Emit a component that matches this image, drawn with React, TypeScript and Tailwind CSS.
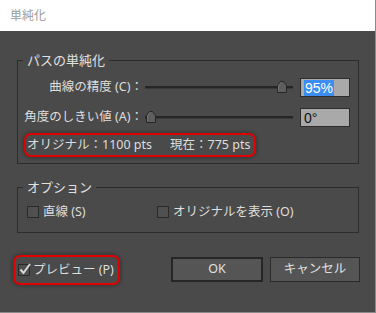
import React from "react";

const FONT = '"Noto Sans", "Noto Sans CJK JP", sans-serif';

function Thumb() {
  return (
    <svg width="10" height="12" viewBox="0 0 10 12" className="block">
      <path d="M0.5 11.5 V4.5 L3.5 0.5 H6.5 L9.5 4.5 V11.5 Z" fill="#5e5e5e" stroke="#262626" strokeWidth="1" />
      <path d="M1.5 10.5 V4.8 L4 1.5" fill="none" stroke="#727272" strokeWidth="1" />
    </svg>
  );
}

function Slider({ pos }: { pos: number }) {
  return (
    <div className="relative h-[19px] w-[148px]">
      <div className="absolute left-0 right-0 top-[8px] h-[3px] bg-[#262626] border-b border-[#3a3a3a]" />
      <div className="absolute top-[3px]" style={{ left: pos }}>
        <Thumb />
      </div>
    </div>
  );
}

function Box({ checked }: { checked?: boolean }) {
  return (
    <div className="relative w-[12px] h-[12px] border border-[#2a2a2a] bg-[#505050] shrink-0">
      {checked && (
        <svg width="14" height="14" viewBox="0 0 14 14" className="absolute left-[-1px] top-[-3px]">
          <path d="M2.5 7.5 L5.5 11 L12 2" fill="none" stroke="#d8d8d8" strokeWidth="2" />
        </svg>
      )}
    </div>
  );
}

export default function App() {
  return (
    <div
      className="w-[376px] h-[313px] bg-[#4a4a4a] flex flex-col border-r border-b border-[#8a8a8a] overflow-hidden"
      style={{ fontFamily: FONT }}
    >
      <div className="h-[31px] bg-white flex items-center pl-[10px] text-[12px] text-[#9c9c9c] shrink-0">
        単純化
      </div>
      <div className="flex flex-col pl-[13px] text-[12.5px] text-[#dedede]">
        <fieldset className="ml-[4px] mt-[21px] w-[342px] border border-[#2c2c2c] pb-[6px]">
          <legend className="ml-[5px] px-[4px] leading-[16px] text-[13px] text-[#e2e2e2]">パスの単純化</legend>
          <div className="pt-[10px] flex flex-col">
            <div className="flex items-center h-[19px]">
              <div className="w-[127px] text-right pr-[2px] whitespace-nowrap">曲線の精度 (C)：</div>
              <Slider pos={132} />
              <div className="ml-[7px] w-[50px] h-[19px] bg-[#a9a9a9] border border-[#2d2d2d] flex items-center pl-[3px]">
                <span className="bg-[#3b8ef0] text-white text-[14px] leading-[16px] px-[1px]" style={{ fontFamily: '"Liberation Sans", sans-serif' }}>95%</span>
              </div>
            </div>
            <div className="flex items-center h-[19px] mt-[11px]">
              <div className="w-[127px] text-right pr-[2px] whitespace-nowrap">角度のしきい値 (A)：</div>
              <Slider pos={1} />
              <div className="ml-[7px] w-[50px] h-[19px] bg-[#a9a9a9] border border-[#2d2d2d] flex items-center pl-[3px]">
                <span className="text-[#111] text-[14px] leading-[16px]" style={{ fontFamily: '"Liberation Sans", sans-serif' }}>0°</span>
              </div>
            </div>
            <div className="mt-[6px] ml-[6px] self-start h-[24px] border-2 border-[#e00000] rounded-[7px] flex items-center pl-[1px] pr-[4px] whitespace-nowrap shadow-[0_0_4px_rgba(0,0,0,0.45)]">
              <span>オリジナル：1100 pts</span>
              <span className="ml-[18px]">現在：775 pts</span>
            </div>
          </div>
        </fieldset>
        <fieldset className="ml-[4px] mt-[15px] w-[342px] border border-[#2c2c2c] pb-[14px]">
          <legend className="ml-[5px] px-[4px] leading-[16px] text-[13px] text-[#e2e2e2]">オプション</legend>
          <div className="pt-[11px] flex items-center h-[23px]">
            <div className="flex items-center gap-[4px] pl-[9px] w-[139px]">
              <Box />
              <span>直線 (S)</span>
            </div>
            <div className="flex items-center gap-[4px]">
              <Box />
              <span>オリジナルを表示 (O)</span>
            </div>
          </div>
        </fieldset>
        <div className="mt-[22px] flex items-start">
          <div className="h-[30px] w-[107px] border-2 border-[#e00000] rounded-[7px] flex items-center pl-[3px] gap-[3px] whitespace-nowrap shadow-[0_0_4px_rgba(0,0,0,0.45)]">
            <Box checked />
            <span>プレビュー (P)</span>
          </div>
          <button className="ml-[51px] mt-[2px] w-[92px] h-[25px] bg-[#555555] border-2 border-[#262626] flex items-center justify-center text-[#e0e0e0]" style={{ fontFamily: FONT }}>
            OK
          </button>
          <button className="ml-[7px] mt-[2px] w-[90px] h-[25px] bg-[#555555] border border-[#2a2a2a] flex items-center justify-center text-[#e0e0e0]" style={{ fontFamily: FONT }}>
            キャンセル
          </button>
        </div>
      </div>
    </div>
  );
}
